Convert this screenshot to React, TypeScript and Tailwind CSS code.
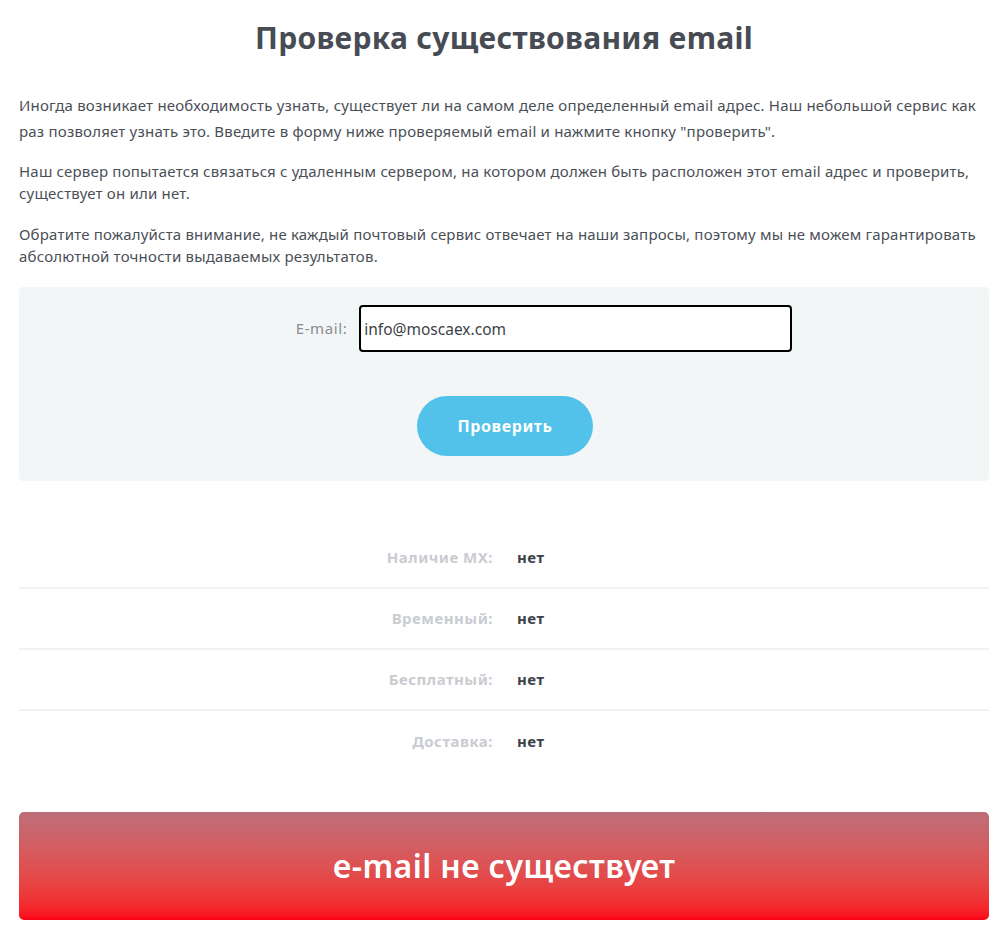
import { useState } from "react";

const rows = [
	{ label: "Наличие MX:", value: "нет" },
	{ label: "Временный:", value: "нет" },
	{ label: "Бесплатный:", value: "нет" },
	{ label: "Доставка:", value: "нет" },
];

export default function App() {
	const [email, setEmail] = useState("info@moscaex.com");

	return (
		<div className="min-h-[934px] bg-white pl-[19px] pr-[15px] font-['Noto_Sans',sans-serif] text-[#4a4f57]">
			<h1 className="pt-[18px] text-center text-[30px] font-bold leading-[40px] tracking-[0.3px] text-[#474c54]">
				Проверка существования email
			</h1>

			{/* Intro text */}
			<div className="mt-[34px] text-[15px] tracking-[0.2px]">
				<p className="leading-[26px]">
					Иногда возникает необходимость узнать, существует ли на самом деле
					определенный email адрес. Наш небольшой сервис как раз позволяет
					узнать это. Введите в форму ниже проверяемый email и нажмите кнопку
					"проверить".
				</p>
				<p className="mt-[16px] leading-[22px]">
					Наш сервер попытается связаться с удаленным сервером, на котором
					должен быть расположен этот email адрес и проверить, существует он
					или нет.
				</p>
				<p className="mt-[19px] leading-[22px]">
					Обратите пожалуйста внимание, не каждый почтовый сервис отвечает на
					наши запросы, поэтому мы не можем гарантировать абсолютной точности
					выдаваемых результатов.
				</p>
			</div>

			{/* Form */}
			<div className="mt-[20px] flex h-[194px] flex-col items-center rounded-[4px] bg-[#f3f6f7] pt-[18px]">
				<div className="flex items-center gap-[12px] pl-[80px]">
					<label className="text-[15px] tracking-[0.6px] text-[#8a8d91]">
						E-mail:
					</label>
					<input
						value={email}
						onChange={(e) => setEmail(e.target.value)}
						className="h-[47px] w-[433px] rounded-[4px] border-2 border-black bg-white px-[3px] text-[15.5px] text-[#3d4249] outline-none"
					/>
				</div>
				<button className="ml-[2px] mt-[44px] h-[60px] w-[176px] rounded-full bg-[#52c2ea] text-[16px] font-bold tracking-[0.6px] text-white">
					Проверить
				</button>
			</div>

			{/* Results */}
			<div className="mt-[47px]">
				{rows.map((r, i) => (
					<div
						key={r.label}
						className={
							i === rows.length - 1
								? "flex h-[61px] items-center"
								: "flex h-[61px] items-center border-b-2 border-[#f0f1f2]"
						}
					>
						<div className="w-[474px] text-right text-[15px] font-bold tracking-[0.5px] text-[#c9ccd1]">
							{r.label}
						</div>
						<div className="ml-[24px] text-[15px] font-bold tracking-[0.5px] text-[#3d4249]">
							{r.value}
						</div>
					</div>
				))}
			</div>

			{/* Result banner */}
			<div className="mt-[40px] flex h-[108px] items-center justify-center rounded-[5px] bg-gradient-to-b from-[#bd6e79] to-[#fb0017]">
				<span className="text-[32px] font-semibold tracking-[0.4px] text-white">
					e-mail не существует
				</span>
			</div>
		</div>
	);
}
